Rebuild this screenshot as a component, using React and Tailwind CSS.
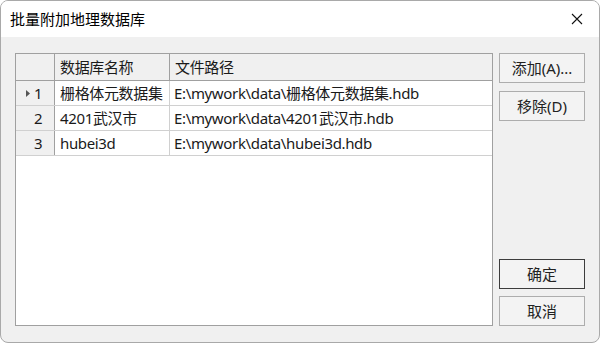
import React from "react";

const rows = [
  { id: 1, name: "栅格体元数据集", path: "E:\\mywork\\data\\栅格体元数据集.hdb", current: true },
  { id: 2, name: "4201武汉市", path: "E:\\mywork\\data\\4201武汉市.hdb" },
  { id: 3, name: "hubei3d", path: "E:\\mywork\\data\\hubei3d.hdb" },
];

function DlgButton({ children, primary }) {
  return (
    <button
      className={`h-[30px] w-[86px] bg-[#f3f3f3] text-[15px] text-[#222] border ${
        primary ? "border-[#3c3c3c]" : "border-[#adadad]"
      }`}
    >
      {children}
    </button>
  );
}

export default function App() {
  return (
    <div
      className="w-[600px] h-[343px] flex flex-col border border-[#a9a9a9] rounded-[8px] overflow-hidden bg-[#f0f0f0] text-[#1a1a1a]"
      style={{ fontFamily: '"Noto Sans", "Noto Sans CJK SC", sans-serif' }}
    >
      {/* title bar */}
      <div className="h-[36px] bg-white flex items-center justify-between pl-[9px] pr-[14px] shrink-0">
        <span className="text-[15px] leading-none text-black">批量附加地理数据库</span>
        <svg width="12" height="12" viewBox="0 0 12 12" className="mr-[2px]">
          <path d="M1 1 L11 11 M11 1 L1 11" stroke="#111" strokeWidth="1.1" />
        </svg>
      </div>

      {/* body */}
      <div className="flex-1 flex pt-[16px] pl-[14px] pr-[14px] pb-[16px] gap-[6px]">
        <div className="w-[478px] h-[273px] bg-white border border-[#a0a0a0] flex flex-col text-[15px] tracking-[-0.35px]">
          {/* header */}
          <div className="flex h-[27px] bg-[#f0f0f0] border-b border-[#a0a0a0] shrink-0">
            <div className="w-[39px] border-r border-[#a0a0a0]" />
            <div className="w-[115px] border-r border-[#a0a0a0] pl-[5px] flex items-center">数据库名称</div>
            <div className="flex-1 pl-[5px] flex items-center">文件路径</div>
          </div>
          {rows.map((r) => (
            <div key={r.id} className="flex h-[25px] border-b border-[#d0d0d0]">
              <div className="w-[39px] bg-[#f0f0f0] border-r border-[#a0a0a0] flex items-center pl-[9px] gap-[4px]">
                <span className="w-[5px] flex justify-center">
                  {r.current && (
                    <svg width="4" height="7" viewBox="0 0 4 7">
                      <path d="M0 0 L4 3.5 L0 7 Z" fill="#555" />
                    </svg>
                  )}
                </span>
                <span>{r.id}</span>
              </div>
              <div className="w-[115px] border-r border-[#d0d0d0] pl-[5px] flex items-center whitespace-nowrap overflow-hidden">
                {r.name}
              </div>
              <div className="flex-1 pl-[4px] flex items-center whitespace-nowrap">{r.path}</div>
            </div>
          ))}
        </div>

        <div className="flex flex-col justify-between h-[273px]">
          <div className="flex flex-col gap-[8px]">
            <DlgButton>添加(A)...</DlgButton>
            <DlgButton>移除(D)</DlgButton>
          </div>
          <div className="flex flex-col gap-[7px]">
            <DlgButton primary>确定</DlgButton>
            <DlgButton>取消</DlgButton>
          </div>
        </div>
      </div>
    </div>
  );
}
